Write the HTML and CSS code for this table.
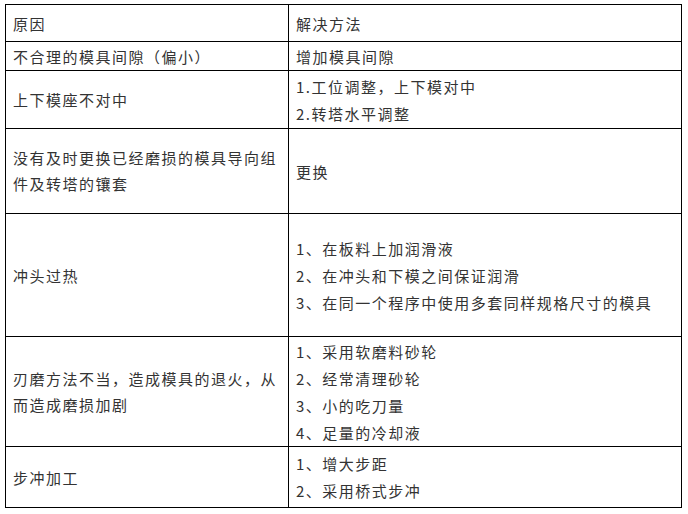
FILE: index.html
```html
<!DOCTYPE html>
<html lang="zh-CN">
<head>
<meta charset="utf-8">
<link rel="stylesheet" href="styles.css">
</head>
<body>
<table class="tbl">
  <colgroup><col class="c1"><col class="c2"></colgroup>
  <tr class="r1"><td>原因</td><td>解决方法</td></tr>
  <tr class="r2"><td>不合理的模具间隙（偏小）</td><td>增加模具间隙</td></tr>
  <tr class="r3"><td>上下模座不对中</td><td><p>1.工位调整，上下模对中</p><p>2.转塔水平调整</p></td></tr>
  <tr class="r4"><td class="wrap">没有及时更换已经磨损的模具导向组件及转塔的镶套</td><td>更换</td></tr>
  <tr class="r5"><td>冲头过热</td><td><p>1、在板料上加润滑液</p><p>2、在冲头和下模之间保证润滑</p><p>3、在同一个程序中使用多套同样规格尺寸的模具</p></td></tr>
  <tr class="r6"><td class="wrap">刃磨方法不当，造成模具的退火，从而造成磨损加剧</td><td><p>1、采用软磨料砂轮</p><p>2、经常清理砂轮</p><p>3、小的吃刀量</p><p>4、足量的冷却液</p></td></tr>
  <tr class="r7"><td>步冲加工</td><td><p>1、增大步距</p><p>2、采用桥式步冲</p></td></tr>
</table>
</body>
</html>
```
FILE: styles.css
```css
html, body {
  margin: 0;
  padding: 0;
  background: #fff;
}
body {
  padding: 4px 0 0 5px;
  font-family: "Noto Sans CJK SC", "Noto Sans", sans-serif;
  font-size: 15px;
  letter-spacing: 1.5px;
  color: #333;
}
.tbl {
  border-collapse: collapse;
  table-layout: fixed;
  width: 677px;
}
.c1 { width: 283px; }
.c2 { width: 393px; }
.tbl td {
  border: 1px solid #000;
  padding: 0 7px;
  vertical-align: middle;
  line-height: 27px;
}
.tbl td.wrap { line-height: 26px; }
.tbl p { margin: 0; }
.r1 { height: 37px; }
.r2 { height: 29px; }
.r3 { height: 58px; }
.r4 { height: 85px; }
.r5 { height: 123px; }
.r6 { height: 110px; }
.r7 { height: 61px; }
```
